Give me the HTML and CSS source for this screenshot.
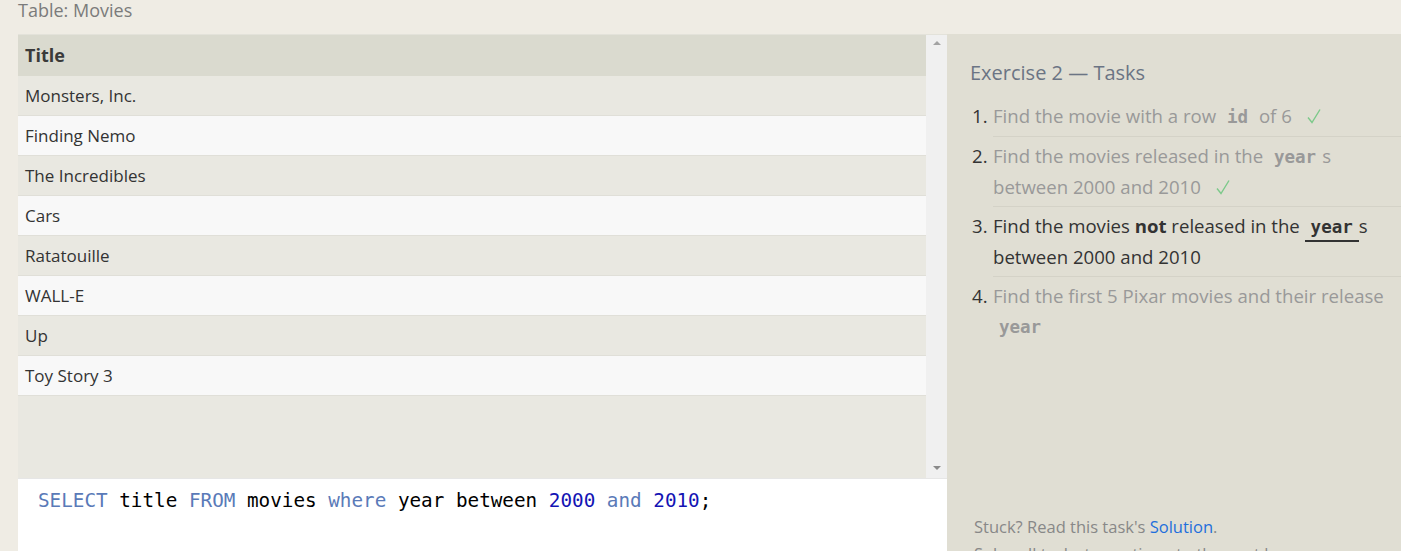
FILE: index.html
```html
<!DOCTYPE html>
<html>
<head>
<meta charset="utf-8">
<link rel="stylesheet" href="styles.css">
</head>
<body>
<div class="page">
  <div class="caption">Table: Movies</div>
  <div class="main">
    <div class="left">
      <div class="results">
        <div class="table-scroll">
          <div class="row head">Title</div>
          <div class="row odd">Monsters, Inc.</div>
          <div class="row even">Finding Nemo</div>
          <div class="row odd">The Incredibles</div>
          <div class="row even">Cars</div>
          <div class="row odd">Ratatouille</div>
          <div class="row even">WALL-E</div>
          <div class="row odd">Up</div>
          <div class="row even">Toy Story 3</div>
          <div class="filler"></div>
        </div>
        <div class="scrollbar">
          <span class="arrow up"></span>
          <span class="arrow down"></span>
        </div>
      </div>
      <div class="editor">
        <code class="sql"><span class="kw">SELECT</span> title <span class="kw">FROM</span> movies <span class="kw">where</span> year between <span class="num">2000</span> <span class="kw">and</span> <span class="num">2010</span>;</code>
      </div>
    </div>
    <div class="panel">
      <h2 class="panel-title">Exercise 2 — Tasks</h2>
      <ol class="tasks">
        <li class="task done"><span class="n">1.</span><span class="t">Find the movie with a row <code class="c">id</code> of 6 <svg class="check" viewBox="0 0 14 16" width="14" height="16"><path d="M1 9.5 L5 14.5 L13 1.5" fill="none" stroke="#7cc98a" stroke-width="1.4"/></svg></span></li>
        <li class="task done"><span class="n">2.</span><span class="t">Find the movies released in the <code class="c">year</code>s between 2000 and 2010 <svg class="check" viewBox="0 0 14 16" width="14" height="16"><path d="M1 9.5 L5 14.5 L13 1.5" fill="none" stroke="#7cc98a" stroke-width="1.4"/></svg></span></li>
        <li class="task active"><span class="n">3.</span><span class="t">Find the movies <b>not</b> released in the <code class="c">year</code>s between 2000 and 2010</span></li>
        <li class="task todo"><span class="n">4.</span><span class="t">Find the first 5 Pixar movies and their release <code class="c">year</code></span></li>
      </ol>
      <div class="foot">
        <p>Stuck? Read this task's <a href="#">Solution</a>.</p>
        <p>Solve all tasks to continue to the next lesson.</p>
      </div>
    </div>
  </div>
</div>
</body>
</html>
```
FILE: styles.css
```css
html, body {
  margin: 0;
  padding: 0;
  overflow: hidden;
}
body {
  background: #efece4;
  font-family: "Open Sans", "Noto Sans", sans-serif;
  color: #333;
}
.page {
  height: 600px;
}
.caption {
  height: 34px;
  padding-left: 18px;
  font-size: 18px;
  line-height: 21px;
  color: #7b7b7b;
}
.main {
  display: flex;
  margin-left: 18px;
  height: 560px;
}
.left {
  width: 929px;
  display: flex;
  flex-direction: column;
}
.results {
  display: flex;
  height: 444px;
  border-top: 1px solid #e3e2da;
  box-sizing: border-box;
}
.table-scroll {
  flex: 1;
  display: flex;
  flex-direction: column;
  background: #e9e8e1;
}
.row {
  height: 39px;
  border-bottom: 1px solid #e0dfd8;
  padding-left: 7px;
  font-size: 17px;
  line-height: 40px;
  color: #333;
}
.row.head {
  height: 41px;
  line-height: 41px;
  background: #dadacf;
  font-weight: 700;
  font-size: 18px;
  color: #3a3a3a;
  border-bottom: none;
}
.row.odd { background: #e9e8e1; }
.row.even { background: #f8f8f8; }
.filler { flex: 1; }
.scrollbar {
  width: 21px;
  background: #f0f0f0;
  display: flex;
  flex-direction: column;
  justify-content: space-between;
  align-items: center;
  padding: 6px 0 8px;
  box-sizing: border-box;
}
.arrow {
  width: 0;
  height: 0;
  border-left: 4px solid transparent;
  border-right: 4px solid transparent;
}
.arrow.up { border-bottom: 4px solid #a3a3a3; }
.arrow.down { border-top: 4px solid #8a8a8a; }
.editor {
  flex: 1;
  background: #fff;
  border-top: 1px solid #e6e6e6;
  padding: 10px 20px;
}
.sql {
  font-family: "DejaVu Sans Mono", "Liberation Mono", monospace;
  font-size: 19.3px;
  line-height: 24px;
  color: #000;
}
.kw { color: #5a7ab8; }
.num { color: #1414b4; }
.panel {
  flex: 1;
  background: #e0ded3;
  padding: 0 0 0 23px;
  display: flex;
  flex-direction: column;
}
.panel-title {
  margin: 25px 0 0;
  font-size: 20px;
  font-weight: 400;
  line-height: 28px;
  color: #6b7484;
}
.tasks {
  list-style: none;
  margin: 9px 0 0;
  padding: 0;
}
.task {
  display: flex;
  font-size: 18.6px;
  line-height: 30px;
  padding: 5px 0 4px;
}
.task .n {
  width: 21px;
  flex: none;
  padding-left: 2px;
  color: #333;
}
.task .t {
  flex: 1;
}
.tasks .task + .task {
  background: linear-gradient(#d4d2c7, #d4d2c7) no-repeat 23px 0 / 100% 1px;
}
.task.done .t, .task.todo .t { color: #999; }
.task.active .t { color: #333; }
.c {
  font-family: "DejaVu Sans Mono", "Liberation Mono", monospace;
  font-weight: 700;
  font-size: 17.5px;
  margin: 0 6px;
  color: #999;
}
.task.active .c {
  color: #333;
  margin: 0;
  padding: 0 6px 3px;
  border-bottom: 2px solid #333;
}
.check {
  margin-left: 10px;
  vertical-align: -1px;
}
.foot {
  margin-top: auto;
  padding: 0 0 0 4px;
  font-size: 16.5px;
  line-height: 27px;
  color: #888;
  height: 81px;
}
.foot p { margin: 0; }
.foot a { color: #1f6fdc; text-decoration: none; }
```
